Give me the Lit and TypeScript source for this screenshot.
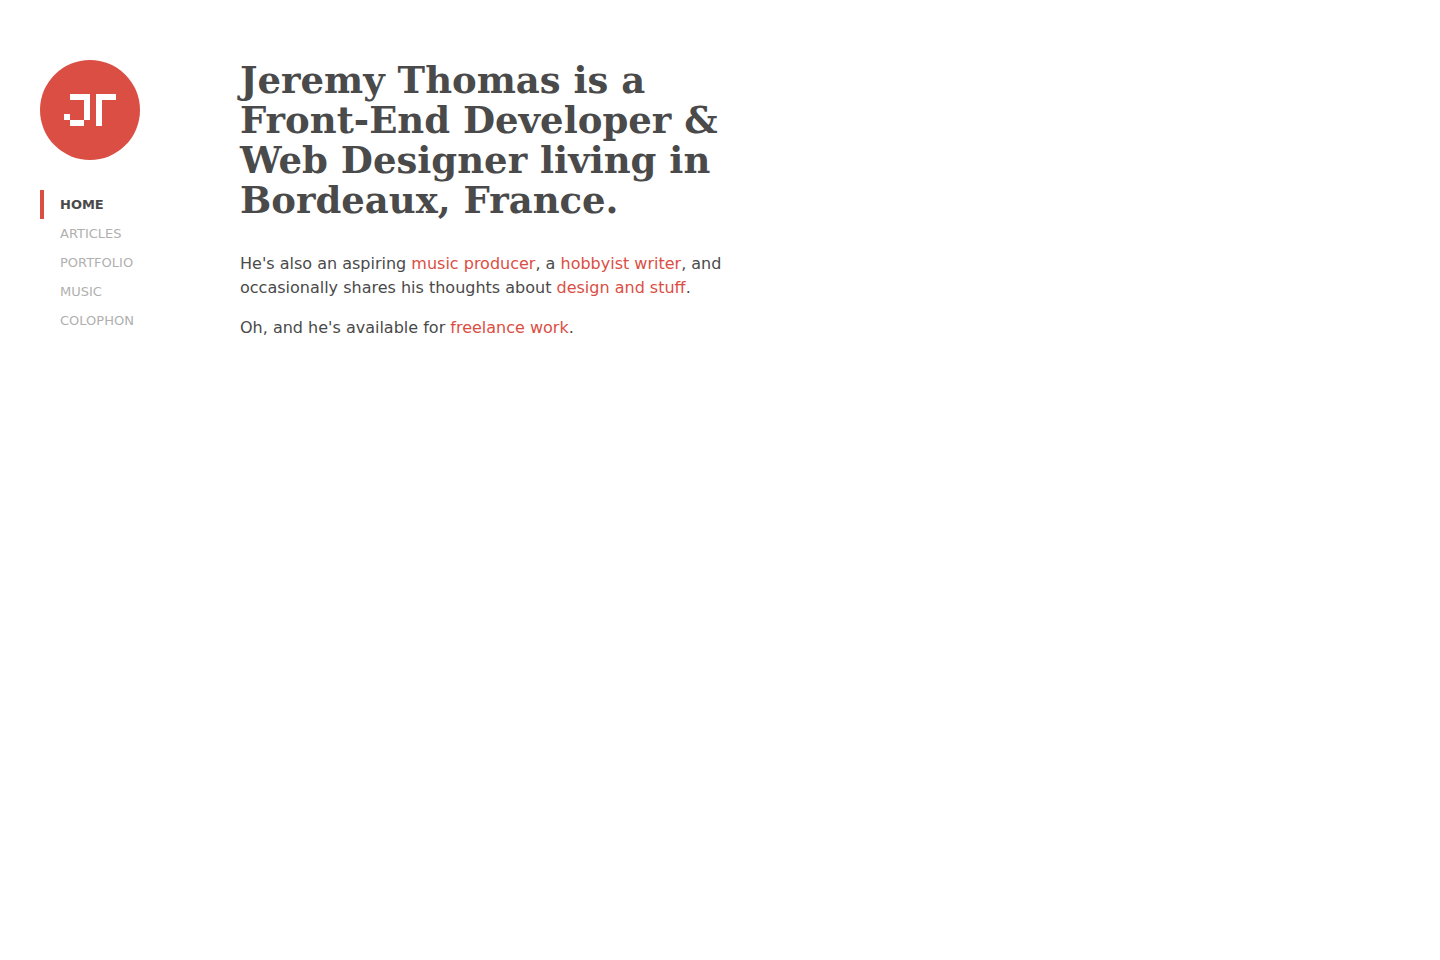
import { LitElement, html, css } from "lit";
import { customElement, property } from "lit/decorators.js";
import { classMap } from "lit/directives/class-map.js";

interface NavItem {
  label: string;
  href: string;
}

const NAV_ITEMS: NavItem[] = [
  { label: "Home", href: "#home" },
  { label: "Articles", href: "#articles" },
  { label: "Portfolio", href: "#portfolio" },
  { label: "Music", href: "#music" },
  { label: "Colophon", href: "#colophon" },
];

@customElement("site-logo")
export class SiteLogo extends LitElement {
  static styles = css`
    :host {
      display: block;
    }
    .link,
    .mark {
      display: block;
    }
    .link {
      width: 100px;
    }
  `;

  render() {
    return html`
      <a class="link" href="#home" aria-label="Jeremy Thomas">
        <svg class="mark" width="100" height="100" viewBox="0 0 100 100" aria-hidden="true">
          <circle cx="50" cy="50" r="50" fill="#db4e44" />
          <g fill="#fff" shape-rendering="crispEdges">
            <rect x="30" y="34" width="20" height="6" />
            <rect x="44" y="34" width="6" height="26" />
            <rect x="24" y="54" width="6" height="6" />
            <rect x="30" y="60" width="14" height="6" />
            <rect x="56" y="34" width="20" height="6" />
            <rect x="56" y="34" width="6" height="32" />
          </g>
        </svg>
      </a>
    `;
  }
}

@customElement("site-nav")
export class SiteNav extends LitElement {
  @property() current = "Home";

  static styles = css`
    :host {
      display: block;
    }
    .list {
      list-style: none;
      margin: 0;
      padding: 0;
    }
    .item {
      display: block;
      border-left: 4px solid transparent;
      padding: 4px 0 4px 16px;
      font-size: 13px;
      line-height: 21px;
      color: #b0b0b0;
      text-decoration: none;
      text-transform: uppercase;
    }
    .active {
      border-left-color: #db4e44;
      color: #4a4a4a;
      font-weight: 700;
    }
  `;

  render() {
    return html`
      <nav aria-label="Main">
        <ul class="list">
          ${NAV_ITEMS.map(
            (item) => html`<li>
              <a
                class=${classMap({ item: true, active: item.label === this.current })}
                href=${item.href}
                >${item.label}</a
              >
            </li>`
          )}
        </ul>
      </nav>
    `;
  }
}

@customElement("app-root")
export class AppRoot extends LitElement {
  static styles = css`
    :host {
      display: block;
      min-height: 100vh;
      background: #fff;
      color: #4a4a4a;
      font-family: Verdana, "DejaVu Sans", sans-serif;
    }
    .page {
      display: flex;
      align-items: flex-start;
      gap: 60px;
      padding: 60px 40px;
    }
    .side {
      display: flex;
      flex-direction: column;
      flex: none;
      gap: 30px;
      width: 140px;
    }
    .intro {
      flex: 0 1 490px;
    }
    .title {
      margin: 0 0 32px;
      font-family: Georgia, "DejaVu Serif", serif;
      font-size: 37px;
      line-height: 40px;
      font-weight: 700;
    }
    .text {
      margin: 0 0 16px;
      font-size: 16px;
      line-height: 24px;
    }
    .link {
      color: #db4e44;
      text-decoration: none;
    }
  `;

  render() {
    return html`
      <div class="page">
        <header class="side">
          <site-logo></site-logo>
          <site-nav current="Home"></site-nav>
        </header>
        <main class="intro">
          <h1 class="title">
            Jeremy Thomas is a<br />Front-End Developer &amp;<br />Web Designer living in<br />Bordeaux, France.
          </h1>
          <p class="text">
            He's also an aspiring <a class="link" href="#music">music producer</a>, a
            <a class="link" href="#writing">hobbyist writer</a>, and<br />occasionally shares his thoughts about
            <a class="link" href="#articles">design and stuff</a>.
          </p>
          <p class="text">
            Oh, and he's available for <a class="link" href="#freelance">freelance work</a>.
          </p>
        </main>
      </div>
    `;
  }
}
